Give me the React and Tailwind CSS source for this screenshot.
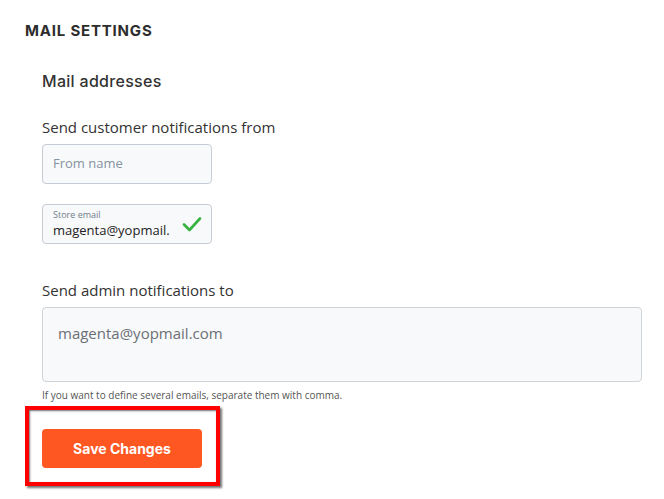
export default function App() {
  return (
    <div className="min-h-[499px] w-[664px] bg-white font-['Open_Sans',sans-serif] text-[#333]">
      <div className="px-[25px] pt-[21px]">
        <h2 className="font-['Inter',sans-serif] text-[15px] font-bold leading-[20px] tracking-[0.8px] text-[#2d2d2d]">
          MAIL SETTINGS
        </h2>

        <div className="pl-[17px]">
          <h3 className="mt-[30px] font-['Inter',sans-serif] text-[16px] font-medium leading-[20px] tracking-[0.3px] text-[#333]">
            Mail addresses
          </h3>

          <p className="mt-[26px] text-[15px] leading-[20px] text-[#333]">
            Send customer notifications from
          </p>

          <div className="mt-[7px] flex h-[40px] w-[170px] items-center rounded-[4px] border border-[#c6ccd3] bg-[#f8f9fb] px-[10px]">
            <span className="text-[13px] text-[#8592a0]">From name</span>
          </div>

          <div className="mt-[20px] flex h-[40px] w-[170px] items-center rounded-[4px] border border-[#c6ccd3] bg-[#f8f9fb] pl-[10px] pr-[9px]">
            <div className="flex min-w-0 flex-1 flex-col overflow-hidden">
              <span className="text-[9px] leading-[12px] text-[#717d8a]">Store email</span>
              <span className="whitespace-nowrap text-[13px] leading-[18px] text-[#222]">magenta@yopmail.</span>
            </div>
            <svg width="20" height="16" viewBox="0 0 20 16" className="shrink-0">
              <path d="M2 8.5 L7.5 14 L18 2.5" fill="none" stroke="#36b33f" strokeWidth="2.6" strokeLinecap="round" strokeLinejoin="round" />
            </svg>
          </div>

          <p className="mt-[36px] text-[15px] leading-[20px] text-[#333]">
            Send admin notifications to
          </p>

          <div className="mt-[7px] h-[75px] w-[600px] rounded-[4px] border border-[#cfd4d9] bg-[#f8f9fb] px-[15px] pt-[13px]">
            <span className="text-[15px] text-[#6b6f74]">magenta@yopmail.com</span>
          </div>

          <p className="mt-[7px] text-[10px] leading-[12px] text-[#555]">
            If you want to define several emails, separate them with comma.
          </p>
        </div>

        <div className="mt-[5px] w-[195px] border-[4px] border-[#ff0000] px-[13px] pb-[14px] pt-[19px] shadow-[inset_1px_1px_2px_rgba(0,0,0,0.55),2px_2px_2px_rgba(0,0,0,0.55)]">
          <button
            type="button"
            className="flex h-[39px] w-[160px] items-center justify-center rounded-[4px] bg-[#ff5722] font-['Inter',sans-serif] text-[14px] font-bold text-white"
          >
            Save Changes
          </button>
        </div>
      </div>
    </div>
  )
}
